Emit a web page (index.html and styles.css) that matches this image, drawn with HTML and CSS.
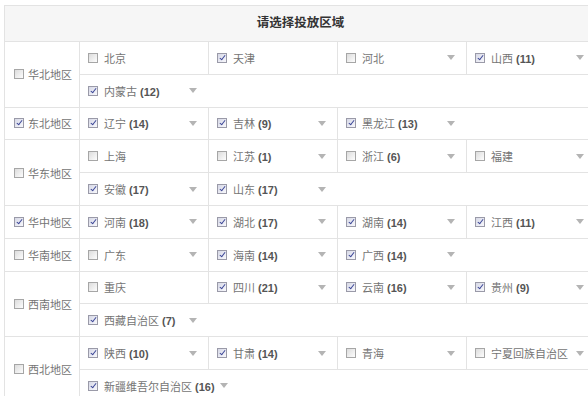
FILE: index.html
```html
<!DOCTYPE html>
<html lang="zh-CN">
<head>
    <meta charset="UTF-8">
    <meta name="viewport" content="width=device-width, initial-scale=1.0">
    <title>投放区域</title>
    <link rel="stylesheet" href="styles.css">
</head>
<body>

    <div class="area">
        <div class="area-head">请选择投放区域</div>

        <!-- 华北 -->
        <div class="region">
            <div class="region-name"><span class="cb"></span>华北地区</div>
            <div class="prov-list">
                <div class="prov-row">
                    <div class="prov"><span class="cb"></span><span class="name">北京</span></div>
                    <div class="prov"><span class="cb on"></span><span class="name">天津</span></div>
                    <div class="prov"><span class="cb"></span><span class="name">河北</span><i class="arrow"></i></div>
                    <div class="prov"><span class="cb on"></span><span class="name">山西 <b>(11)</b></span><i class="arrow"></i></div>
                </div>
                <div class="prov-row">
                    <div class="prov"><span class="cb on"></span><span class="name">内蒙古 <b>(12)</b></span><i class="arrow"></i></div>
                </div>
            </div>
        </div>

        <!-- 东北 -->
        <div class="region">
            <div class="region-name"><span class="cb on"></span>东北地区</div>
            <div class="prov-list">
                <div class="prov-row">
                    <div class="prov"><span class="cb on"></span><span class="name">辽宁 <b>(14)</b></span><i class="arrow"></i></div>
                    <div class="prov"><span class="cb on"></span><span class="name">吉林 <b>(9)</b></span><i class="arrow"></i></div>
                    <div class="prov"><span class="cb on"></span><span class="name">黑龙江 <b>(13)</b></span><i class="arrow"></i></div>
                </div>
            </div>
        </div>

        <!-- 华东 -->
        <div class="region">
            <div class="region-name"><span class="cb"></span>华东地区</div>
            <div class="prov-list">
                <div class="prov-row">
                    <div class="prov"><span class="cb"></span><span class="name">上海</span></div>
                    <div class="prov"><span class="cb"></span><span class="name">江苏 <b>(1)</b></span><i class="arrow"></i></div>
                    <div class="prov"><span class="cb"></span><span class="name">浙江 <b>(6)</b></span><i class="arrow"></i></div>
                    <div class="prov"><span class="cb"></span><span class="name">福建</span><i class="arrow"></i></div>
                </div>
                <div class="prov-row">
                    <div class="prov"><span class="cb on"></span><span class="name">安徽 <b>(17)</b></span><i class="arrow"></i></div>
                    <div class="prov"><span class="cb on"></span><span class="name">山东 <b>(17)</b></span><i class="arrow"></i></div>
                </div>
            </div>
        </div>

        <!-- 华中 -->
        <div class="region">
            <div class="region-name"><span class="cb on"></span>华中地区</div>
            <div class="prov-list">
                <div class="prov-row">
                    <div class="prov"><span class="cb on"></span><span class="name">河南 <b>(18)</b></span><i class="arrow"></i></div>
                    <div class="prov"><span class="cb on"></span><span class="name">湖北 <b>(17)</b></span><i class="arrow"></i></div>
                    <div class="prov"><span class="cb on"></span><span class="name">湖南 <b>(14)</b></span><i class="arrow"></i></div>
                    <div class="prov"><span class="cb on"></span><span class="name">江西 <b>(11)</b></span><i class="arrow"></i></div>
                </div>
            </div>
        </div>

        <!-- 华南 -->
        <div class="region">
            <div class="region-name"><span class="cb"></span>华南地区</div>
            <div class="prov-list">
                <div class="prov-row">
                    <div class="prov"><span class="cb"></span><span class="name">广东</span><i class="arrow"></i></div>
                    <div class="prov"><span class="cb on"></span><span class="name">海南 <b>(14)</b></span><i class="arrow"></i></div>
                    <div class="prov"><span class="cb on"></span><span class="name">广西 <b>(14)</b></span><i class="arrow"></i></div>
                </div>
            </div>
        </div>

        <!-- 西南 -->
        <div class="region">
            <div class="region-name"><span class="cb"></span>西南地区</div>
            <div class="prov-list">
                <div class="prov-row">
                    <div class="prov"><span class="cb"></span><span class="name">重庆</span></div>
                    <div class="prov"><span class="cb on"></span><span class="name">四川 <b>(21)</b></span><i class="arrow"></i></div>
                    <div class="prov"><span class="cb on"></span><span class="name">云南 <b>(16)</b></span><i class="arrow"></i></div>
                    <div class="prov"><span class="cb on"></span><span class="name">贵州 <b>(9)</b></span><i class="arrow"></i></div>
                </div>
                <div class="prov-row">
                    <div class="prov"><span class="cb on"></span><span class="name">西藏自治区 <b>(7)</b></span><i class="arrow"></i></div>
                </div>
            </div>
        </div>

        <!-- 西北 -->
        <div class="region">
            <div class="region-name"><span class="cb"></span>西北地区</div>
            <div class="prov-list">
                <div class="prov-row">
                    <div class="prov"><span class="cb on"></span><span class="name">陕西 <b>(10)</b></span><i class="arrow"></i></div>
                    <div class="prov"><span class="cb on"></span><span class="name">甘肃 <b>(14)</b></span><i class="arrow"></i></div>
                    <div class="prov"><span class="cb"></span><span class="name">青海</span><i class="arrow"></i></div>
                    <div class="prov"><span class="cb"></span><span class="name">宁夏回族自治区</span><i class="arrow"></i></div>
                </div>
                <div class="prov-row">
                    <div class="prov"><span class="cb on"></span><span class="name">新疆维吾尔自治区 <b>(16)</b></span><i class="arrow"></i></div>
                </div>
            </div>
        </div>
    </div>

</body>
</html>
```

FILE: styles.css
```css
html, body {
    overflow: hidden;
}
body {
    margin: 0;
    background-color: #fff;
    font-family: "Liberation Sans", "Noto Sans CJK SC", sans-serif;
    font-size: 11px;
    color: #747474;
}
.area {
    width: 591px;
    margin: 5px 0 0 4px;
    border-top: 1px solid #e3e3e3;
    border-left: 1px solid #e3e3e3;
}
.area-head {
    height: 35px;
    line-height: 35px;
    text-align: center;
    background-color: #f6f6f6;
    border-bottom: 1px solid #e3e3e3;
    font-size: 12.5px;
    font-weight: bold;
    color: #333;
}
.region {
    display: flex;
    border-bottom: 1px solid #e3e3e3;
}
.region-name {
    flex: 0 0 75px;
    display: flex;
    align-items: center;
    gap: 3px;
    padding-left: 9px;
    box-sizing: border-box;
    border-right: 1px solid #e3e3e3;
}
.prov-list {
    flex: 1;
}
.prov-row {
    display: flex;
    height: 31.8px;
}
.prov-row + .prov-row {
    border-top: 1px solid #e3e3e3;
}
.prov {
    flex: 0 0 auto;
    min-width: 128px;
    box-sizing: border-box;
    display: flex;
    align-items: center;
    padding: 0 11px 0 8px;
}
.prov + .prov {
    min-width: 129px;
    border-left: 1px solid #e3e3e3;
}
.name {
    margin-left: 5px;
    margin-right: 5px;
    white-space: nowrap;
}
.name b {
    color: #555;
}
.arrow {
    margin-left: auto;
    width: 0;
    height: 0;
    border-left: 4.5px solid transparent;
    border-right: 4.5px solid transparent;
    border-top: 5px solid #b4b4b4;
}

/* checkbox */
.cb {
    position: relative;
    flex: 0 0 auto;
    width: 8px;
    height: 8px;
    border: 1px solid #a6a6a6;
    background: linear-gradient(135deg, #dcdcdc, #fdfdfd);
    margin-right: 1px;
}
.cb.on {
    border-color: #9a9aa8;
    background: linear-gradient(135deg, #d6d8e6, #f8f8fc);
}
.cb.on::after {
    content: "";
    position: absolute;
    left: 2.5px;
    top: 0;
    width: 2px;
    height: 5px;
    border-right: 1.5px solid #3a4596;
    border-bottom: 1.5px solid #3a4596;
    transform: rotate(38deg);
}
```
